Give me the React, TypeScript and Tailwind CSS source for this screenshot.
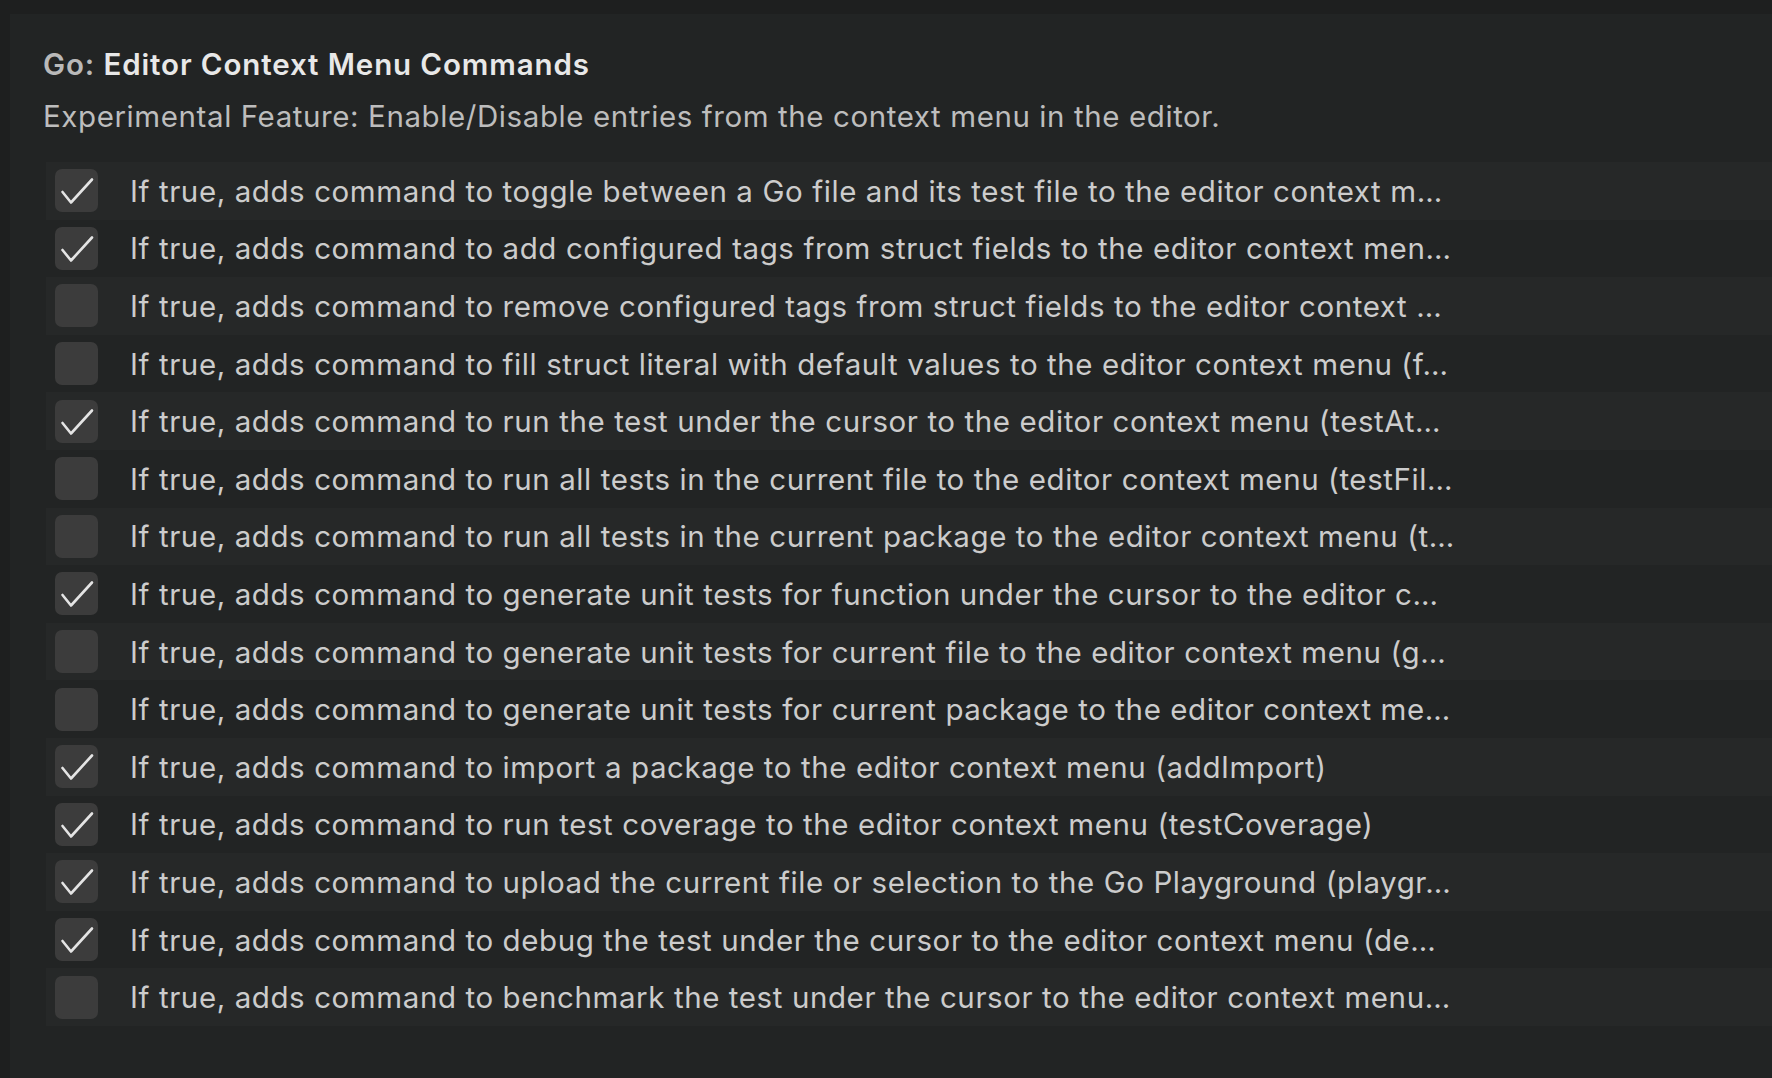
const rows: { label: string; checked: boolean }[] = [
  { label: "If true, adds command to toggle between a Go file and its test file to the editor context m…", checked: true },
  { label: "If true, adds command to add configured tags from struct fields to the editor context men…", checked: true },
  { label: "If true, adds command to remove configured tags from struct fields to the editor context …", checked: false },
  { label: "If true, adds command to fill struct literal with default values to the editor context menu (f…", checked: false },
  { label: "If true, adds command to run the test under the cursor to the editor context menu (testAt…", checked: true },
  { label: "If true, adds command to run all tests in the current file to the editor context menu (testFil…", checked: false },
  { label: "If true, adds command to run all tests in the current package to the editor context menu (t…", checked: false },
  { label: "If true, adds command to generate unit tests for function under the cursor to the editor c…", checked: true },
  { label: "If true, adds command to generate unit tests for current file to the editor context menu (g…", checked: false },
  { label: "If true, adds command to generate unit tests for current package to the editor context me…", checked: false },
  { label: "If true, adds command to import a package to the editor context menu (addImport)", checked: true },
  { label: "If true, adds command to run test coverage to the editor context menu (testCoverage)", checked: true },
  { label: "If true, adds command to upload the current file or selection to the Go Playground (playgr…", checked: true },
  { label: "If true, adds command to debug the test under the cursor to the editor context menu (de…", checked: true },
  { label: "If true, adds command to benchmark the test under the cursor to the editor context menu…", checked: false },
];

function Checkbox({ checked }: { checked: boolean }) {
  return (
    <span className="grid h-[43px] w-[43px] shrink-0 place-items-center rounded-[7px] bg-[#3c3c3c]">
      {checked && (
        <svg width="43" height="43" viewBox="0 0 43 43" aria-hidden>
          <polyline
            points="7.5,23 16,33.5 37,10.5"
            fill="none"
            stroke="#e4e4e4"
            strokeWidth="2.6"
            strokeLinecap="round"
            strokeLinejoin="round"
          />
        </svg>
      )}
    </span>
  );
}

export default function App() {
  return (
    <div className="min-h-screen bg-[#1e1f1f] pl-[10px] pt-[14px] font-['Inter',sans-serif] text-[29.5px] tracking-[0.02em]">
      <div className="h-[1064px] overflow-hidden bg-[#222424] pl-[33px] pt-[30px]">
        <h1 className="leading-[40px] font-semibold tracking-[0.03em] text-[#e8e8e8]">
          <span className="text-[#b9b9b9]">Go: </span>Editor Context Menu Commands
        </h1>
        <p className="mt-[12px] leading-[40px] text-[#bdbdbd]">
          Experimental Feature: Enable/Disable entries from the context menu in the editor.
        </p>
        <div className="ml-[3px] mt-[26px] flex flex-col">
          {rows.map((row, i) => (
            <div
              key={i}
              className={`flex h-[57.6px] items-center gap-[32px] pl-[9px] ${i % 2 === 0 ? "bg-[#262828]" : "bg-[#222424]"}`}
            >
              <Checkbox checked={row.checked} />
              <span className="max-w-[1400px] truncate leading-[40px] text-[#cccccc]">{row.label}</span>
            </div>
          ))}
        </div>
      </div>
    </div>
  );
}
